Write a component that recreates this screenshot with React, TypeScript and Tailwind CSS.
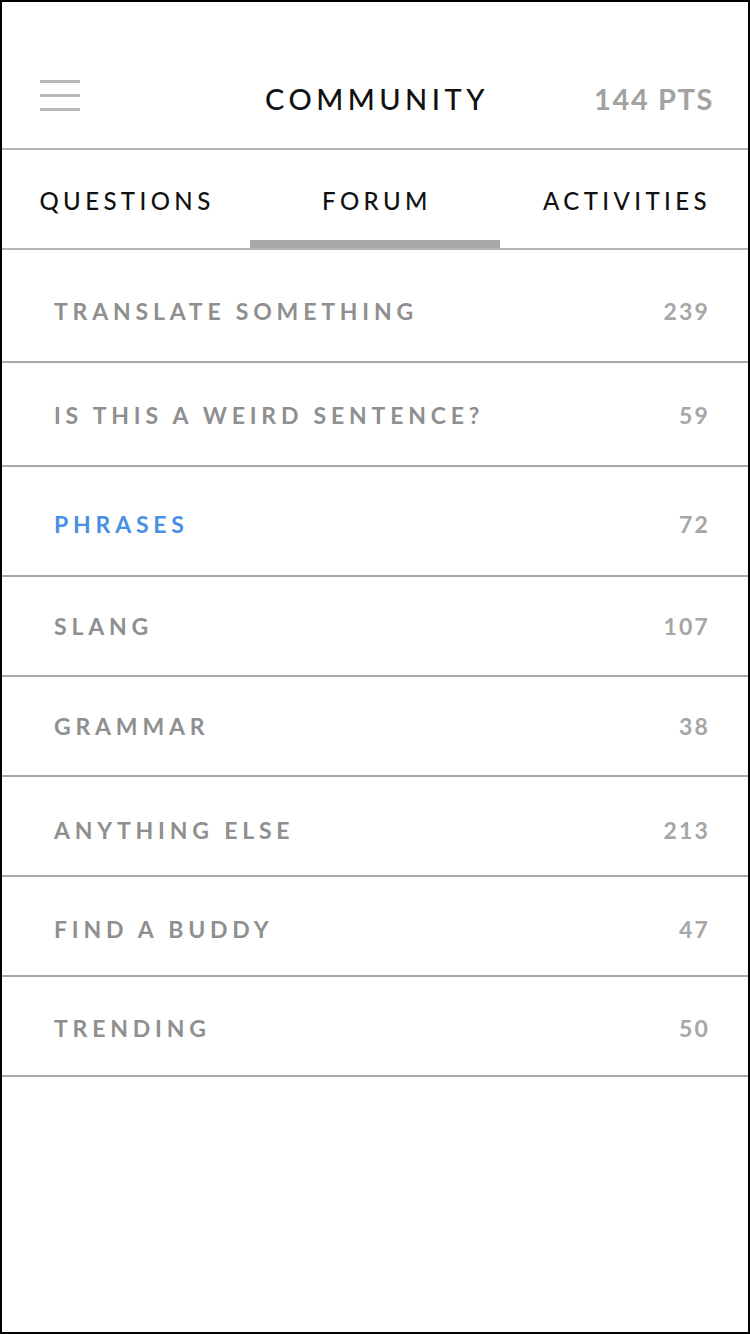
const topics = [
  { label: 'TRANSLATE SOMETHING', count: 239, row: 'h-[113px] pt-[11px]' },
  { label: 'IS THIS A WEIRD SENTENCE?', count: 59, row: 'h-[104px] pt-[2px]' },
  { label: 'PHRASES', count: 72, row: 'h-[110px] pt-[6px]', active: true },
  { label: 'SLANG', count: 107, row: 'h-[100px] pt-[1px]' },
  { label: 'GRAMMAR', count: 38, row: 'h-[100px]' },
  { label: 'ANYTHING ELSE', count: 213, row: 'h-[100px] pt-[8px]' },
  { label: 'FIND A BUDDY', count: 47, row: 'h-[100px] pt-[6px]' },
  { label: 'TRENDING', count: 50, row: 'h-[100px] pt-[5px]' },
];

const tabs = ['QUESTIONS', 'FORUM', 'ACTIVITIES'];

const App = () => {
  return (
    <div className="w-[750px] h-[1334px] border-2 border-black bg-white font-['Lato',sans-serif] overflow-hidden">
      {/* header */}
      <div className="h-[148px] border-b-2 border-[#b4b4b4] grid grid-cols-[1fr_auto_1fr] items-center pt-[46px] pl-[38px] pr-[34px]">
        <div className="flex flex-col gap-[11px] w-[40px] -mt-[6px]">
          <span className="h-[3px] bg-[#b8b8b8]" />
          <span className="h-[3px] bg-[#b8b8b8]" />
          <span className="h-[3px] bg-[#b8b8b8]" />
        </div>
        <h1 className="text-[29px] font-medium tracking-[4.5px] text-[#111] leading-none">COMMUNITY</h1>
        <div className="justify-self-end text-[29px] font-bold tracking-[1.6px] text-[#a2a2a2] leading-none">
          144 PTS
        </div>
      </div>

      {/* tabs */}
      <div className="h-[100px] border-b-2 border-[#b4b4b4] grid grid-cols-3 -mx-[2px]">
        {tabs.map((t) => (
          <div key={t} className="flex flex-col">
            <div className="flex-1 flex items-center justify-center pt-[11px] pl-[4px] text-[24px] font-medium tracking-[4.4px] text-[#111] leading-none">
              {t}
            </div>
            <div className={t === 'FORUM' ? 'h-[8px] bg-[#a8a8aa]' : 'h-[8px]'} />
          </div>
        ))}
      </div>

      {/* topic list */}
      <div>
        {topics.map((t) => (
          <div
            key={t.label}
            className={`flex items-center justify-between pl-[52px] pr-[38px] border-b-2 border-[#a8a8a8] ${t.row}`}
          >
            <span
              className={`text-[23px] font-bold tracking-[4.8px] leading-none ${t.active ? 'text-[#4a90e2]' : 'text-[#8f8f8f]'}`}
            >
              {t.label}
            </span>
            <span className="text-[23px] font-bold tracking-[2.2px] text-[#a6a6a6] leading-none">{t.count}</span>
          </div>
        ))}
      </div>
    </div>
  );
};

export default App;
